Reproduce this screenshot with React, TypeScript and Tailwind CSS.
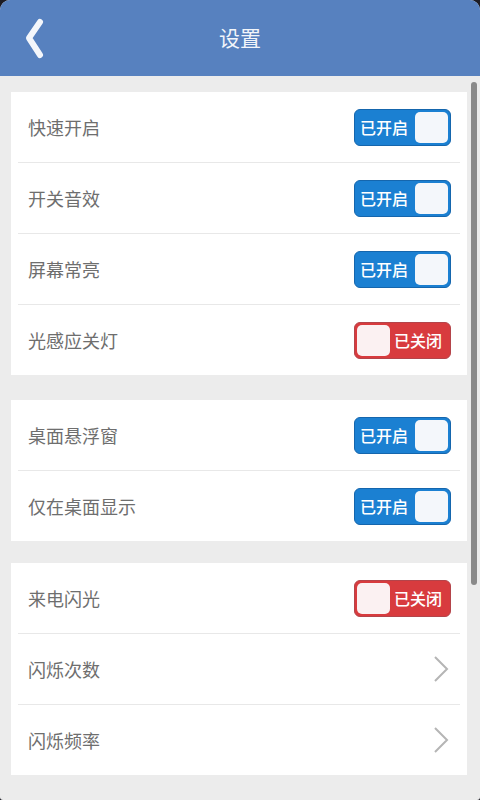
import React, { FC } from "react";

type Row = { label: string; kind: "on" | "off" | "arrow" };

const groups: Row[][] = [
  [
    { label: "快速开启", kind: "on" },
    { label: "开关音效", kind: "on" },
    { label: "屏幕常亮", kind: "on" },
    { label: "光感应关灯", kind: "off" },
  ],
  [
    { label: "桌面悬浮窗", kind: "on" },
    { label: "仅在桌面显示", kind: "on" },
  ],
  [
    { label: "来电闪光", kind: "off" },
    { label: "闪烁次数", kind: "arrow" },
    { label: "闪烁频率", kind: "arrow" },
  ],
];

const gaps = ["mt-[16px]", "mt-[25px]", "mt-[22px]"];

const Toggle: FC<{ on: boolean }> = ({ on }) =>
  on ? (
    <div className="flex h-[37px] w-[97px] items-center rounded-[6px] border border-[#1566ad] bg-[#1b80d2] p-[2px]">
      <span className="flex-1 pl-[3px] text-[16px] font-medium leading-none text-white">已开启</span>
      <span className="h-full w-[33px] rounded-[5px] bg-[#f4f7fb]" />
    </div>
  ) : (
    <div className="flex h-[37px] w-[97px] items-center rounded-[6px] border border-[#b4444a] bg-[#d83b3e] p-[2px]">
      <span className="h-full w-[33px] rounded-[5px] bg-[#fbf1f2]" />
      <span className="flex-1 pl-[4px] text-[16px] font-medium leading-none text-white">已关闭</span>
    </div>
  );

const Chevron: FC = () => (
  <svg width="16" height="28" viewBox="0 0 16 28" className="mr-[2px]">
    <path d="M2 2 L14 14 L2 26" fill="none" stroke="#b5b5b5" strokeWidth="2" />
  </svg>
);

const App: FC = () => {
  return (
    <div
      className="h-[800px] w-[480px] overflow-hidden bg-[#1c1c24]"
      style={{ fontFamily: '"Noto Sans CJK SC", "Noto Sans", sans-serif' }}
    >
      <div className="relative flex h-full flex-col overflow-hidden rounded-t-[10px] rounded-b-[3px] bg-[#ececec]">
        <header className="relative flex h-[76px] shrink-0 items-center justify-center bg-[#5781bf]">
          <svg width="32" height="44" viewBox="0 0 32 44" className="absolute left-[23px] top-[17px]">
            <path
              d="M17 5 L6 21 L17 38"
              fill="none"
              stroke="#f3f6fb"
              strokeWidth="6"
              strokeLinecap="round"
              strokeLinejoin="round"
            />
          </svg>
          <span className="text-[21px] text-[#f2f5fa]">设置</span>
        </header>

        <main className="flex flex-col pl-[11px] pr-[13px]">
          {groups.map((group, gi) => (
            <section key={gi} className={"bg-white " + gaps[gi]}>
              {group.map((row, ri) => (
                <div key={row.label} className="px-[7px]">
                  <div
                    className={
                      "flex h-[70px] box-content items-center justify-between pl-[10px] pr-[9px] " +
                      (ri < group.length - 1 ? "border-b border-[#e8e8e8]" : "")
                    }
                  >
                    <span className="text-[18px] text-[#6e6e6e]">{row.label}</span>
                    {row.kind === "arrow" ? <Chevron /> : <Toggle on={row.kind === "on"} />}
                  </div>
                </div>
              ))}
            </section>
          ))}
        </main>

        <div className="absolute right-[3px] top-[82px] h-[503px] w-[6px] rounded-full bg-[#8a8a8a]" />
      </div>
    </div>
  );
};

export default App;
